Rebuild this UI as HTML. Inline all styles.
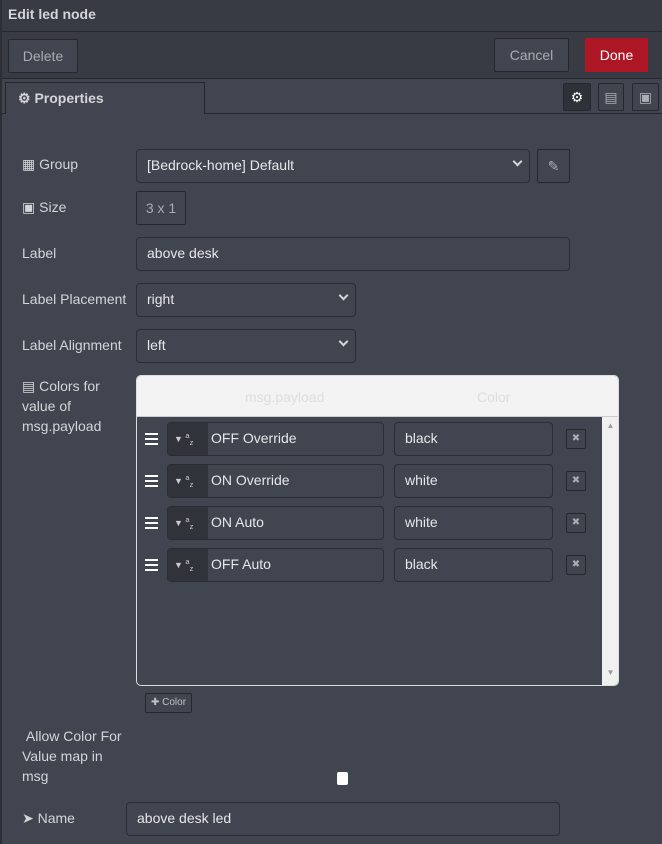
<!DOCTYPE html><html><head><style>
*{box-sizing:border-box}
body{margin:0;width:662px;height:844px;overflow:hidden;background:#41454f;font-family:"Liberation Sans",sans-serif;font-size:14px;color:#d3d5d9;position:relative}
.a{position:absolute}
.in{position:absolute;border:1px solid #2a2d33;border-radius:4px;background:#41454f;color:#e6e7ea;padding-left:10px;line-height:30px;height:34px}
.lbl{position:absolute;left:22px;color:#d3d5d9}
.btn{position:absolute;border:1px solid #24272c;border-radius:2px;background:#41454f;color:#a9acb2;text-align:center}
.chev{position:absolute;right:8px;top:8px;width:7px;height:7px;border-right:2px solid #d3d5d9;border-bottom:2px solid #d3d5d9;transform:rotate(45deg)}
</style></head><body>
<div class="a" style="left:0;top:0;width:662px;height:32px;background:#383b44;border-bottom:1px solid #24272c"></div>
<div class="a" style="left:8px;top:6px;font-weight:bold;color:#d3d5d9">Edit led node</div>
<div class="a" style="left:0;top:32px;width:662px;height:47px;background:#383b44;border-bottom:1px solid #24272c"></div>
<div class="a" style="left:0;top:0;width:2px;height:844px;background:#2c2f35"></div>
<div class="btn" style="left:8px;top:39px;width:70px;height:34px;line-height:32px;background:#41454f">Delete</div>
<div class="btn" style="left:494px;top:38px;width:75px;height:34px;line-height:32px;background:#41454f">Cancel</div>
<div class="a" style="left:585px;top:38px;width:63px;height:34px;line-height:34px;background:#ad1625;color:#fff;text-align:center">Done</div>
<div class="a" style="left:0;top:113px;width:662px;height:1px;background:#24272c"></div>
<div class="a" style="left:5px;top:82px;width:200px;height:32px;background:#41454f;border:1px solid #24272c;border-bottom:none;font-weight:bold;padding:7px 0 0 12px">&#9881; Properties</div>
<div class="btn" style="left:563px;top:83px;width:28px;height:28px;background:#2e3138;color:#fff;line-height:26px">&#9881;</div>
<div class="btn" style="left:598px;top:83px;width:26px;height:28px;line-height:26px">&#9636;</div>
<div class="btn" style="left:632px;top:83px;width:27px;height:28px;line-height:26px">&#9635;</div>

<div class="lbl" style="top:156px">&#9638; Group</div>
<div class="in" style="left:136px;top:149px;width:394px;height:34px">[Bedrock-home] Default<div class="chev"></div></div>
<div class="btn" style="left:537px;top:149px;width:33px;height:34px;line-height:32px;color:#a9acb2">&#9998;</div>
<div class="lbl" style="top:199px">&#9635; Size</div>
<div class="btn" style="left:136px;top:191px;width:50px;height:34px;line-height:32px">3 x 1</div>
<div class="lbl" style="top:245px">Label</div>
<div class="in" style="left:136px;top:237px;width:434px">above desk</div>
<div class="lbl" style="top:291px">Label Placement</div>
<div class="in" style="left:136px;top:283px;width:220px">right<div class="chev"></div></div>
<div class="lbl" style="top:337px">Label Alignment</div>
<div class="in" style="left:136px;top:329px;width:220px">left<div class="chev"></div></div>
<div class="lbl" style="top:376px;line-height:20px;width:100px">&#9636; Colors for value of msg.payload</div>

<div class="a" style="left:136px;top:375px;width:483px;height:311px;border:1px solid #ddd;border-radius:5px;background:#41454f;overflow:hidden">
 <div class="a" style="left:0;top:0;width:483px;height:41px;background:#f3f3f3;border-bottom:1px solid #ccc;color:#ddd"><span class="a" style="left:108px;top:13px">msg.payload</span><span class="a" style="left:340px;top:13px">Color</span></div>
 <div class="a" style="left:465px;top:41px;width:17px;height:270px;background:#f0f0f0;color:#999;font-size:8px;text-align:center"><div style="margin-top:4px">&#9650;</div><div style="margin-top:238px">&#9660;</div></div>
</div>
<div id="rows"></div>
<script></script>
<div class="btn" style="left:145px;top:693px;width:47px;height:20px;font-size:10px;line-height:18px;color:#c0c2c6">&#10010; Color</div>
<div class="lbl" style="left:22px;top:726px;line-height:20px;width:110px">&nbsp;Allow Color For Value map in msg</div>
<div class="a" style="left:337px;top:772px;width:11px;height:13px;background:#fff;border-radius:2px"></div>
<div class="lbl" style="top:810px">&#10148; Name</div>
<div class="in" style="left:126px;top:802px;width:434px">above desk led</div>

<!-- rows -->
<div class="a" style="left:145px;top:433px;width:13px;height:2px;background:#fff;box-shadow:0 5px #fff,0 10px #fff"></div>
<div class="a" style="left:145px;top:475px;width:13px;height:2px;background:#fff;box-shadow:0 5px #fff,0 10px #fff"></div>
<div class="a" style="left:145px;top:517px;width:13px;height:2px;background:#fff;box-shadow:0 5px #fff,0 10px #fff"></div>
<div class="a" style="left:145px;top:559px;width:13px;height:2px;background:#fff;box-shadow:0 5px #fff,0 10px #fff"></div>

<div class="in" style="left:167px;top:422px;width:217px;padding-left:43px">OFF Override<div class="a" style="left:0;top:0;width:40px;height:32px;background:#30333a;color:#ccc;font-size:9px;line-height:14px;padding:6px 0 0 6px">&#9660; <sup>a</sup><sub>z</sub></div></div>
<div class="in" style="left:394px;top:422px;width:159px">black</div>
<div class="btn" style="left:566px;top:429px;width:20px;height:20px;line-height:18px;font-size:10px">&#10006;</div>
<div class="in" style="left:167px;top:464px;width:217px;padding-left:43px">ON Override<div class="a" style="left:0;top:0;width:40px;height:32px;background:#30333a;color:#ccc;font-size:9px;line-height:14px;padding:6px 0 0 6px">&#9660; <sup>a</sup><sub>z</sub></div></div>
<div class="in" style="left:394px;top:464px;width:159px">white</div>
<div class="btn" style="left:566px;top:471px;width:20px;height:20px;line-height:18px;font-size:10px">&#10006;</div>
<div class="in" style="left:167px;top:506px;width:217px;padding-left:43px">ON Auto<div class="a" style="left:0;top:0;width:40px;height:32px;background:#30333a;color:#ccc;font-size:9px;line-height:14px;padding:6px 0 0 6px">&#9660; <sup>a</sup><sub>z</sub></div></div>
<div class="in" style="left:394px;top:506px;width:159px">white</div>
<div class="btn" style="left:566px;top:513px;width:20px;height:20px;line-height:18px;font-size:10px">&#10006;</div>
<div class="in" style="left:167px;top:548px;width:217px;padding-left:43px">OFF Auto<div class="a" style="left:0;top:0;width:40px;height:32px;background:#30333a;color:#ccc;font-size:9px;line-height:14px;padding:6px 0 0 6px">&#9660; <sup>a</sup><sub>z</sub></div></div>
<div class="in" style="left:394px;top:548px;width:159px">black</div>
<div class="btn" style="left:566px;top:555px;width:20px;height:20px;line-height:18px;font-size:10px">&#10006;</div>
</body></html>
